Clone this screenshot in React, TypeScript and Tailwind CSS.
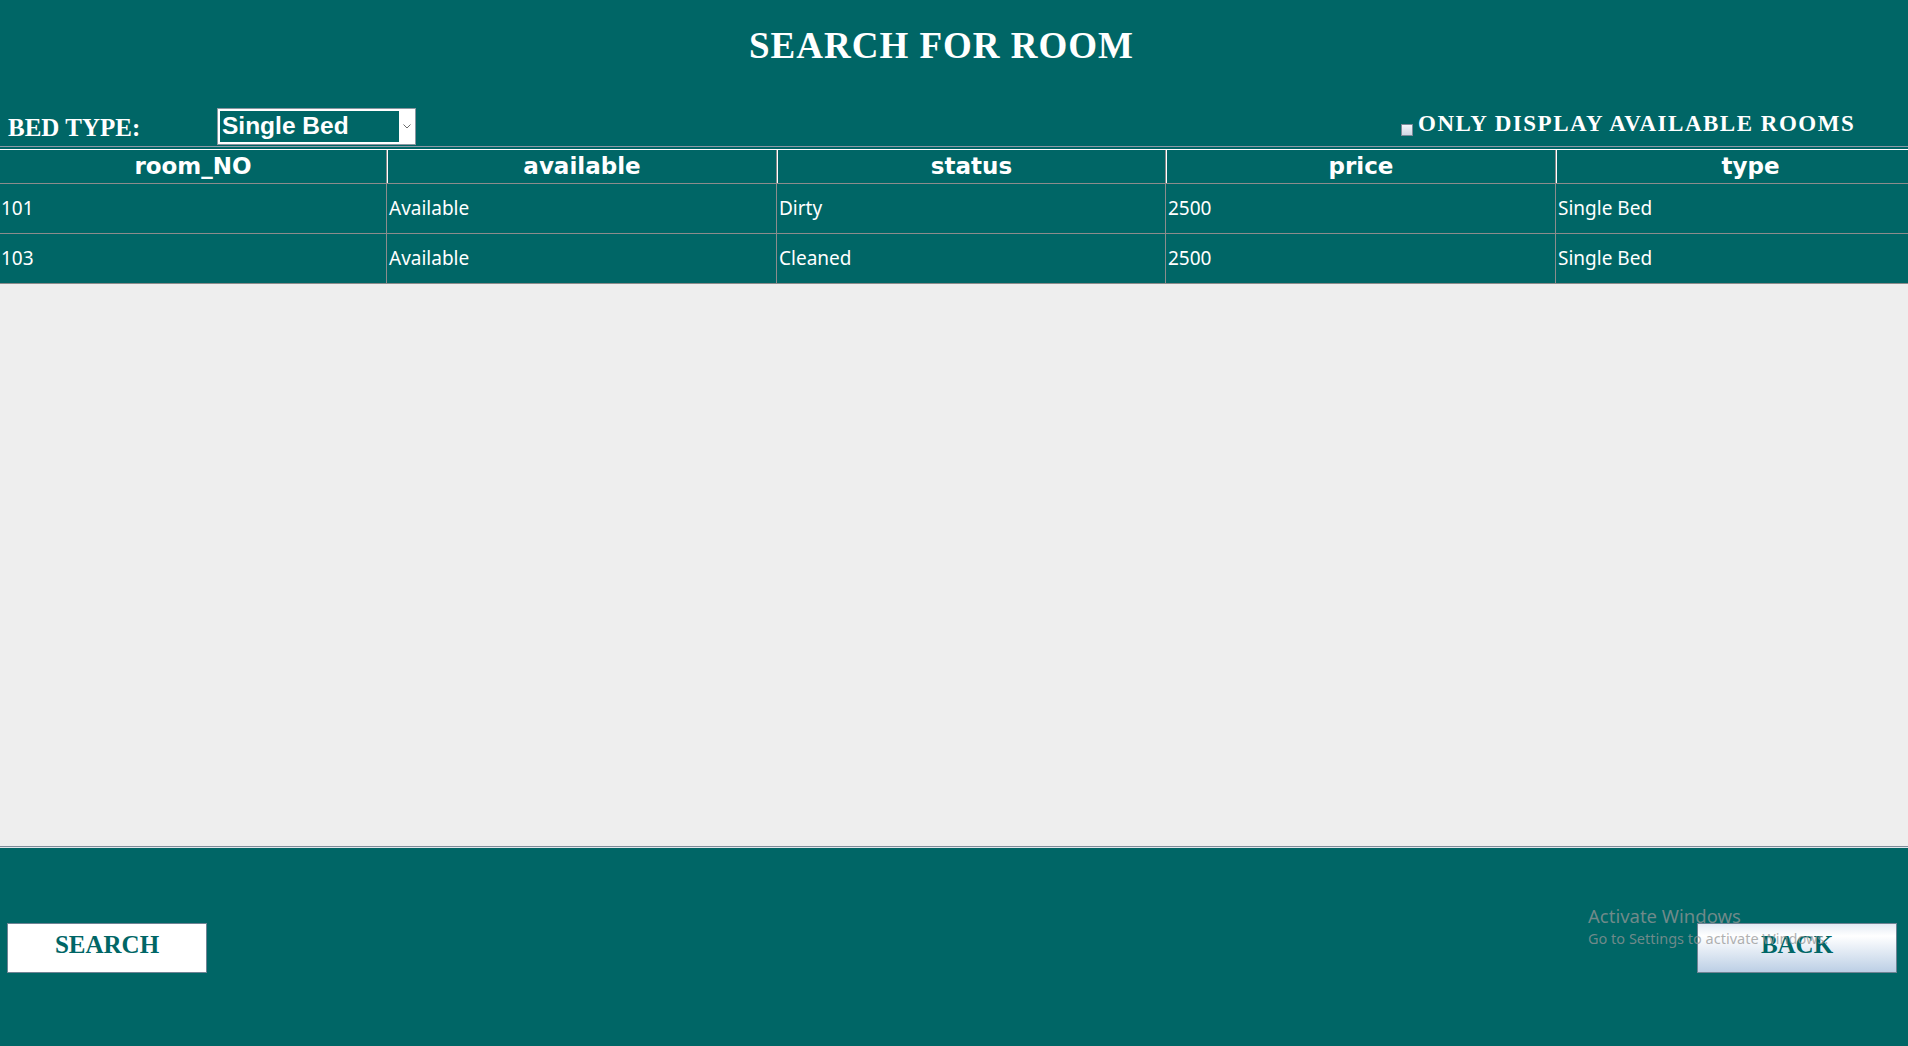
import React from "react";

const rows = [
  ["101", "Available", "Dirty", "2500", "Single Bed"],
  ["103", "Available", "Cleaned", "2500", "Single Bed"],
];

const headers = ["room_NO", "available", "status", "price", "type"];

const headWidths = [
  "w-[387px] border-r border-r-[#8c8c8c]",
  "w-[390px] border-l border-r border-l-white border-r-[#8c8c8c]",
  "w-[389px] border-l border-r border-l-white border-r-[#8c8c8c]",
  "w-[390px] border-l border-r border-l-white border-r-[#8c8c8c]",
  "w-[389px] border-l border-r border-l-white border-r-[#8c8c8c]",
];

const bodyWidths = [
  "w-[387px] pl-[1px]",
  "w-[390px] pl-[2px]",
  "w-[389px] pl-[2px]",
  "w-[390px] pl-[2px]",
  "w-[389px] pl-[2px]",
];

export default function App() {
  return (
    <div className="relative w-[1908px] h-[1046px] overflow-hidden bg-[#006666] flex flex-col">
      {/* Title */}
      <div className="h-[108px] shrink-0 pt-[27px] pr-[25px] text-center">
        <h1 className="font-['Liberation_Serif',serif] font-bold text-[37px] leading-[37px] tracking-[1px] text-white">
          SEARCH FOR ROOM
        </h1>
      </div>

      {/* Controls row */}
      <div className="h-[38px] shrink-0 flex items-start">
        <div className="w-[217px] shrink-0 pl-[8px] pt-[1px] font-['Liberation_Serif',serif] font-bold text-[25px] leading-[38px] text-white">
          BED TYPE:
        </div>
        <div className="w-[199px] h-[37px] shrink-0 border border-[#8a96a0] bg-white p-[2px] pr-0 flex">
          <div className="flex-1 bg-[#006666] flex items-center pl-[2px] font-['Liberation_Sans',Arial,sans-serif] font-bold text-[24.5px] leading-none text-white">
            Single Bed
          </div>
          <div className="w-[16px] flex items-center justify-center">
            <svg width="8" height="5" viewBox="0 0 8 5">
              <path d="M0.5 0.5 L4 4 L7.5 0.5" fill="none" stroke="#6b6b6b" strokeWidth="1" />
            </svg>
          </div>
        </div>
        <div className="ml-[985px] flex items-start">
          <div className="mt-[16px] w-[12px] h-[12px] border border-[#7d8a99] bg-linear-to-b from-[#f4f6fa] to-[#cfd8e4]" />
          <div className="ml-[5px] mt-[4px] font-['Liberation_Serif',serif] font-bold text-[23px] leading-[23px] tracking-[1.5px] text-white whitespace-nowrap">
            ONLY DISPLAY AVAILABLE ROOMS
          </div>
        </div>
      </div>

      {/* Table */}
      <div className="shrink-0 border-t border-[#8e9aa6] pt-[2px] overflow-hidden">
        <div className="h-[35px] flex border-t border-t-white border-b border-b-[#8c8c8c] w-[1945px]">
          {headers.map((h, i) => (
            <div
              key={h}
              className={`${headWidths[i]} shrink-0 flex items-center justify-center font-['DejaVu_Sans',sans-serif] font-bold text-[23px] leading-none text-white`}
            >
              {h}
            </div>
          ))}
        </div>
        {rows.map((r, ri) => (
          <div key={ri} className="h-[50px] flex border-b border-[#8c8c8c] w-[1945px]">
            {r.map((c, ci) => (
              <div
                key={ci}
                className={`${bodyWidths[ci]} shrink-0 border-r border-[#8c8c8c] flex items-center font-['Noto_Sans',sans-serif] text-[19px] leading-none text-white`}
              >
                {c}
              </div>
            ))}
          </div>
        ))}
      </div>

      {/* Empty area */}
      <div className="flex-1 bg-[#eeeeee] border-b border-[#7d8b99]" />

      {/* Bottom */}
      <div className="h-[199px] shrink-0 border-t border-[#dfe5ea] pt-[75px] pl-[7px] pr-[11px] flex justify-between items-start">
        <button className="w-[200px] h-[50px] border border-[#6f8394] bg-white flex items-center justify-center pb-[8px]">
          <span className="font-['Liberation_Serif',serif] font-bold text-[25px] leading-none text-[#006666]">
            SEARCH
          </span>
        </button>
        <button className="w-[200px] h-[50px] border border-[#6f8394] bg-linear-to-b from-[#e4ebf4] via-white via-25% to-[#bccfe5] flex items-center justify-center pb-[8px]">
          <span className="font-['Liberation_Serif',serif] font-bold text-[25px] leading-none text-[#006666]">
            BACK
          </span>
        </button>
      </div>

      {/* Activate Windows watermark */}
      <div className="absolute left-[1588px] top-[904px] pointer-events-none font-['Noto_Sans',sans-serif] text-[rgba(150,150,150,0.75)]">
        <div className="text-[18.5px] leading-[24px]">Activate Windows</div>
        <div className="text-[14.5px] leading-[20px]">Go to Settings to activate Windows.</div>
      </div>
    </div>
  );
}
